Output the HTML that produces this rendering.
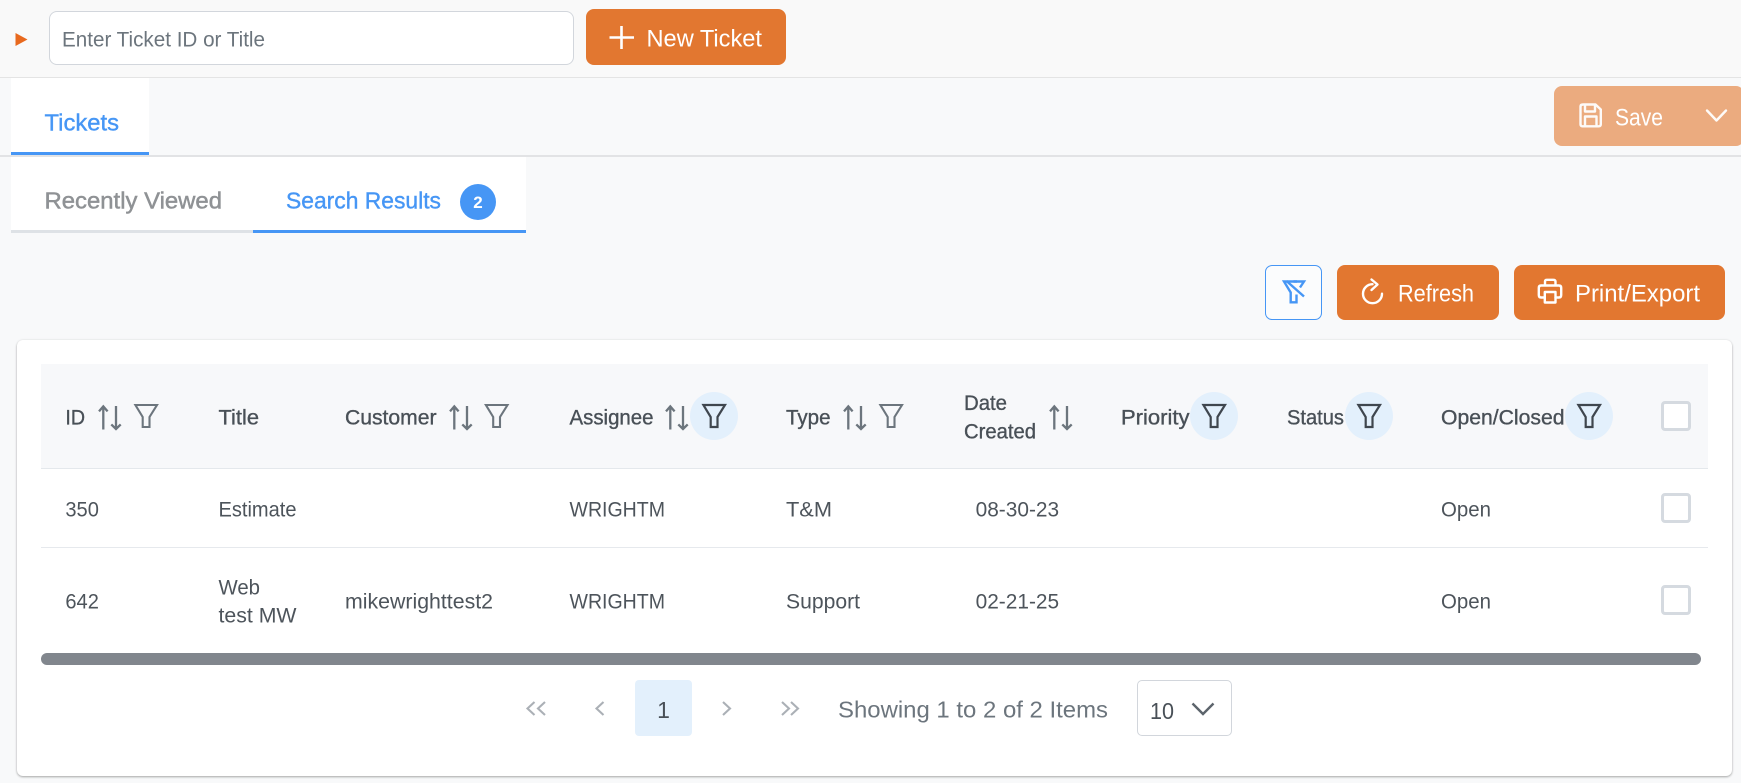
<!DOCTYPE html>
<html lang="en">
<head>
<meta charset="utf-8">
<title>Tickets</title>
<style>
html,body{margin:0;padding:0;width:1741px;height:783px;overflow:hidden;background:#f8f9fa;font-family:"Liberation Sans",sans-serif}
.b{position:absolute;box-sizing:border-box}
svg{position:absolute;left:0;top:0}
text{font-family:"Liberation Sans",sans-serif}
.h{font-size:21px;fill:#495057;stroke:#495057;stroke-width:.35px}
.c{font-size:21px;fill:#4d545b}
.w{fill:#fff;font-size:24px}
.i{fill:none;stroke:#fff;stroke-width:2.4;stroke-linejoin:round;stroke-linecap:round}
.p{fill:none;stroke:#abb0b6;stroke-width:2.1}
</style>
</head>
<body>
<div class="b" style="left:0;top:0;width:1741px;height:78px;background:#f9f9f9;border-bottom:1px solid #e4e4e4"></div>
<div class="b" style="left:49px;top:11px;width:525px;height:54px;background:#fff;border:1px solid #d2d6dc;border-radius:8px"></div>
<div class="b" style="left:586px;top:9px;width:200px;height:56px;background:#e27730;border-radius:8px"></div>
<div class="b" style="left:11px;top:78px;width:138px;height:77px;background:#fff;border-bottom:3px solid #4696f5"></div>
<div class="b" style="left:0;top:155px;width:1741px;height:2px;background:#e2e3e5"></div>
<div class="b" style="left:1554px;top:86px;width:190px;height:60px;background:#ebab7f;border-radius:8px"></div>
<div class="b" style="left:11px;top:157px;width:242px;height:76px;background:#fff;border-bottom:3px solid #dee2e6"></div>
<div class="b" style="left:253px;top:157px;width:273px;height:76px;background:#fff;border-bottom:3px solid #4696f5"></div>
<div class="b" style="left:460px;top:184px;width:36px;height:36px;background:#4696f5;border-radius:50%"></div>
<div class="b" style="left:1265px;top:265px;width:57px;height:55px;border:1px solid #4696f5;border-radius:7px;background:#fbfcfd"></div>
<div class="b" style="left:1337px;top:265px;width:162px;height:55px;background:#e27730;border-radius:8px"></div>
<div class="b" style="left:1514px;top:265px;width:211px;height:55px;background:#e27730;border-radius:8px"></div>
<div class="b" style="left:17px;top:340px;width:1715px;height:436px;background:#fff;border-radius:6px;box-shadow:0 1px 2px rgba(0,0,0,.32),0 0 3px rgba(0,0,0,.05)"></div>
<div class="b" style="left:41px;top:364px;width:1667px;height:105px;background:#f7f8fa;border-bottom:1px solid #e4e8ec"></div>
<div class="b" style="left:41px;top:547px;width:1667px;height:1px;background:#e6e9ed"></div>
<div class="b" style="left:690px;top:392px;width:48px;height:48px;background:#e3f0fc;border-radius:50%"></div>
<div class="b" style="left:1190px;top:392px;width:48px;height:48px;background:#e3f0fc;border-radius:50%"></div>
<div class="b" style="left:1345px;top:392px;width:48px;height:48px;background:#e3f0fc;border-radius:50%"></div>
<div class="b" style="left:1565px;top:392px;width:48px;height:48px;background:#e3f0fc;border-radius:50%"></div>
<div class="b" style="left:1661px;top:401px;width:30px;height:30px;background:#fff;border:3px solid #d5dae0;border-radius:4px"></div>
<div class="b" style="left:1661px;top:493px;width:30px;height:30px;background:#fff;border:3px solid #d5dae0;border-radius:4px"></div>
<div class="b" style="left:1661px;top:585px;width:30px;height:30px;background:#fff;border:3px solid #d5dae0;border-radius:4px"></div>
<div class="b" style="left:41px;top:653px;width:1660px;height:12px;background:#81868d;border-radius:6px"></div>
<div class="b" style="left:635px;top:680px;width:57px;height:56px;background:#e3f0fc;border-radius:4px"></div>
<div class="b" style="left:1137px;top:680px;width:95px;height:56px;background:#fff;border:1px solid #d2d6dc;border-radius:5px"></div>

<svg width="1741" height="783" viewBox="0 0 1741 783">
<defs>
<g id="s" fill="none" stroke="#6c757d" stroke-width="2.3">
<path d="M4.3 24.5V1.8M0 6.4 4.3 1.4 8.6 6.4"/>
<path d="M17 1V24M12.3 19.4 17 24 21.7 19.4"/>
</g>
<path id="f" d="M.9 1H22.5L15 13V23H8.2V13Z" fill="none" stroke="#6c757d" stroke-width="2.1" stroke-linejoin="miter"/>
<path id="fa" d="M.9 1H22.5L15 13V23H8.2V13Z" fill="none" stroke="#3f464e" stroke-width="2.2" stroke-linejoin="miter"/>
</defs>

<path d="M15.5 33 27.5 39.5 15.5 46Z" fill="#e8691e"/>
<text x="62" y="46.5" font-size="21.5" fill="#6c757d" textLength="203" lengthAdjust="spacingAndGlyphs">Enter Ticket ID or Title</text>
<path d="M621.5 26V49M609.5 37.5H634" stroke="#fff" stroke-width="2.6" fill="none"/>
<text class="w" x="646.5" y="46.5" textLength="115.5" lengthAdjust="spacingAndGlyphs">New Ticket</text>

<text x="44.5" y="130.5" font-size="23.5" fill="#4696f5" stroke="#4696f5" stroke-width=".4" textLength="74.5" lengthAdjust="spacingAndGlyphs">Tickets</text>
<text x="44.5" y="208.5" font-size="23.5" fill="#8f9295" stroke="#8f9295" stroke-width=".5" textLength="177.5" lengthAdjust="spacingAndGlyphs">Recently Viewed</text>
<text x="286" y="208.5" font-size="23.5" fill="#4696f5" stroke="#4696f5" stroke-width=".4" textLength="155" lengthAdjust="spacingAndGlyphs">Search Results</text>
<text x="478" y="208" font-size="17" font-weight="700" fill="#fff" text-anchor="middle">2</text>

<g class="i" opacity=".95">
<path d="M1583 104.5H1595.5L1600.8 109.5V124.3Q1600.8 126.3 1598.8 126.3H1582.5Q1580.5 126.3 1580.5 124.3V106.5Q1580.5 104.5 1583 104.5Z"/>
<path d="M1585 105V111.5H1595V105M1585 126V116.5H1596.5V126"/>
<path d="M1707 110.5 1716.5 120.5 1726 110.5"/>
</g>
<text class="w" x="1615" y="125.5" textLength="48" lengthAdjust="spacingAndGlyphs">Save</text>

<g fill="none" stroke="#4696f5" stroke-width="2.4" stroke-linejoin="miter">
<path d="M1297 281.5H1284L1290.7 292.5V302.3H1296.5V294.5"/>
<path d="M1286.5 281 1304 296.5"/>
<path d="M1293.5 281.5H1304L1300 287.5"/>
</g>

<g class="i">
<path d="M1372.5 284.2A9.5 9.5 0 1 0 1382 293.7"/>
<path d="M1371.5 279.5 1377.5 284.5 1371.5 290"/>
</g>
<text class="w" x="1398" y="301.5" textLength="76" lengthAdjust="spacingAndGlyphs">Refresh</text>
<g class="i">
<path d="M1544.5 297.5H1541Q1538.8 297.5 1538.8 295V288Q1538.8 285.5 1541 285.5H1559Q1561.2 285.5 1561.2 288V295Q1561.2 297.5 1559 297.5H1555.5"/>
<path d="M1545 285V281.5Q1545 279.8 1547 279.8H1553Q1555.5 279.8 1555.5 281.5V285"/>
<path d="M1544.8 292H1555.5V302.5H1544.8Z"/>
</g>
<text class="w" x="1575" y="301.5" textLength="125" lengthAdjust="spacingAndGlyphs">Print/Export</text>

<!-- table header -->
<text class="h" x="65.4" y="424.5" textLength="19.6" lengthAdjust="spacingAndGlyphs">ID</text>
<use href="#s" x="99" y="405"/><use href="#f" x="134.5" y="404"/>
<text class="h" x="218.5" y="424.5" textLength="40.5" lengthAdjust="spacingAndGlyphs">Title</text>
<text class="h" x="345" y="424.5" textLength="91.5" lengthAdjust="spacingAndGlyphs">Customer</text>
<use href="#s" x="450" y="405"/><use href="#f" x="485" y="404"/>
<text class="h" x="569.5" y="424.5" textLength="84" lengthAdjust="spacingAndGlyphs">Assignee</text>
<use href="#s" x="666" y="405"/><use href="#fa" x="702.5" y="404"/>
<text class="h" x="786" y="424.5" textLength="44.5" lengthAdjust="spacingAndGlyphs">Type</text>
<use href="#s" x="844" y="405"/><use href="#f" x="879.5" y="404"/>
<text class="h" x="964" y="410" textLength="43" lengthAdjust="spacingAndGlyphs">Date</text>
<text class="h" x="964" y="438.5" textLength="72" lengthAdjust="spacingAndGlyphs">Created</text>
<use href="#s" x="1050" y="405"/>
<text class="h" x="1121" y="424.5" textLength="68.5" lengthAdjust="spacingAndGlyphs">Priority</text>
<use href="#fa" x="1202.5" y="404"/>
<text class="h" x="1287" y="424.5" textLength="57" lengthAdjust="spacingAndGlyphs">Status</text>
<use href="#fa" x="1357.5" y="404"/>
<text class="h" x="1441" y="424.5" textLength="123.5" lengthAdjust="spacingAndGlyphs">Open/Closed</text>
<use href="#fa" x="1577.5" y="404"/>

<!-- rows -->
<text class="c" x="65.4" y="516.5" textLength="33.5" lengthAdjust="spacingAndGlyphs">350</text>
<text class="c" x="218.5" y="516.5" textLength="78" lengthAdjust="spacingAndGlyphs">Estimate</text>
<text class="c" x="569.5" y="516.5" textLength="95.5" lengthAdjust="spacingAndGlyphs">WRIGHTM</text>
<text class="c" x="786" y="516.5" textLength="46" lengthAdjust="spacingAndGlyphs">T&amp;M</text>
<text class="c" x="975.6" y="516.5" textLength="83.5" lengthAdjust="spacingAndGlyphs">08-30-23</text>
<text class="c" x="1441" y="516.5" textLength="50" lengthAdjust="spacingAndGlyphs">Open</text>

<text class="c" x="65.4" y="608.5" textLength="33.5" lengthAdjust="spacingAndGlyphs">642</text>
<text class="c" x="218.5" y="594.5" textLength="41.5" lengthAdjust="spacingAndGlyphs">Web</text>
<text class="c" x="218.5" y="622.5" textLength="78" lengthAdjust="spacingAndGlyphs">test MW</text>
<text class="c" x="345" y="608.5" textLength="148" lengthAdjust="spacingAndGlyphs">mikewrighttest2</text>
<text class="c" x="569.5" y="608.5" textLength="95.5" lengthAdjust="spacingAndGlyphs">WRIGHTM</text>
<text class="c" x="786" y="608.5" textLength="74" lengthAdjust="spacingAndGlyphs">Support</text>
<text class="c" x="975.6" y="608.5" textLength="83.5" lengthAdjust="spacingAndGlyphs">02-21-25</text>
<text class="c" x="1441" y="608.5" textLength="50" lengthAdjust="spacingAndGlyphs">Open</text>

<!-- pagination -->
<path class="p" d="M534.5 702 527.5 708.5 534.5 715M545 702 538 708.5 545 715"/>
<path class="p" d="M603.5 702 596.5 708.5 603.5 715"/>
<text x="663.5" y="718" font-size="23" fill="#495057" text-anchor="middle">1</text>
<path class="p" d="M723 702 730 708.5 723 715"/>
<path class="p" d="M782 702 789 708.5 782 715M791 702 798 708.5 791 715"/>
<text x="838" y="717.5" font-size="23.5" fill="#6c757d" textLength="270" lengthAdjust="spacingAndGlyphs">Showing 1 to 2 of 2 Items</text>
<text x="1150" y="719" font-size="23.5" fill="#495057" textLength="24" lengthAdjust="spacingAndGlyphs">10</text>
<path d="M1192.5 703.5 1203 714 1213.5 703.5" fill="none" stroke="#5c646c" stroke-width="2.4"/>
</svg>
</body>
</html>
